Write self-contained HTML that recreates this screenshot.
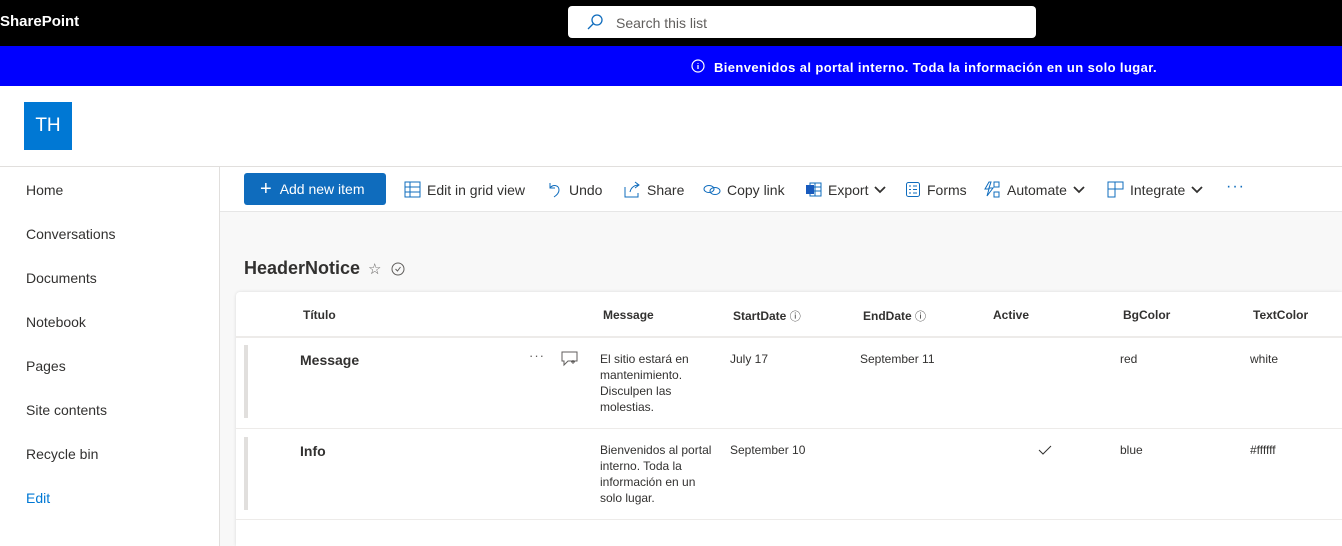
<!DOCTYPE html>
<html><head><meta charset="utf-8"><style>
*{margin:0;padding:0;box-sizing:border-box}
body{width:1342px;height:546px;overflow:hidden;font-family:"Liberation Sans",sans-serif;color:#323130;background:#fff;position:relative}
.abs{position:absolute}
.top{left:0;top:0;width:1342px;height:46px;background:#000}
.search{left:568px;top:6px;width:468px;height:32px;background:#fff;border-radius:4px}
.blue{left:0;top:46px;width:1342px;height:40px;background:#0000ff}
.nav a{position:absolute;left:26px;font-size:14px;color:#323130;text-decoration:none}
.cmd{font-size:14px;color:#323130;top:181px;display:flex;align-items:center;gap:6px;white-space:nowrap}
.hd{font-size:12px;font-weight:bold;color:#323130;top:308px}
.cell{font-size:12px;color:#323130;line-height:16px}
svg{display:block}
</style></head><body>
<div class="abs top"></div>
<div class="abs" style="left:0;top:13px;color:#fff;font-weight:bold;font-size:15px">SharePoint</div>
<div class="abs search"></div>
<svg class="abs" style="left:586px;top:13px" width="18" height="18" viewBox="0 0 18 18"><circle cx="11" cy="7" r="5" fill="none" stroke="#0f6cbd" stroke-width="1.3"/><path d="M7.5 10.5L2 16" stroke="#0f6cbd" stroke-width="1.3"/></svg>
<div class="abs" style="left:616px;top:15px;font-size:14px;color:#605e5c">Search this list</div>
<div class="abs blue"></div>
<svg class="abs" style="left:691px;top:59px" width="14" height="14" viewBox="0 0 14 14"><circle cx="7" cy="7" r="6" fill="none" stroke="#fff" stroke-width="1.2"/><path d="M7 6v4M7 4v.8" stroke="#fff" stroke-width="1.3"/></svg>
<div class="abs" style="left:714px;top:60px;color:#fff;font-weight:bold;font-size:13px;letter-spacing:0.4px">Bienvenidos al portal interno. Toda la información en un solo lugar.</div>
<div class="abs" style="left:24px;top:102px;width:48px;height:48px;background:#0078d4;color:#fff;font-size:19px;line-height:48px;text-align:center">TH</div>
<div class="abs" style="left:0;top:166px;width:1342px;height:1px;background:#e1dfdd"></div>
<div class="abs" style="left:219px;top:167px;width:1px;height:379px;background:#e1dfdd"></div>
<div class="nav">
<a style="top:182px">Home</a><a style="top:226px">Conversations</a><a style="top:270px">Documents</a><a style="top:314px">Notebook</a><a style="top:358px">Pages</a><a style="top:402px">Site contents</a><a style="top:446px">Recycle bin</a><a style="top:490px;color:#0078d4">Edit</a>
</div>
<div class="abs" style="left:220px;top:212px;width:1122px;height:334px;background:#f8f8f8"></div>
<div class="abs" style="left:220px;top:211px;width:1122px;height:1px;background:#e6e6e6"></div>
<div class="abs" style="left:244px;top:173px;width:142px;height:32px;background:#0f6cbd;border-radius:3px;color:#fff;font-size:14px;display:flex;align-items:center;padding-left:16px;gap:8px"><span style="font-size:20px;font-weight:300;line-height:1">+</span>Add new item</div>
<div class="abs cmd" style="left:404px"><svg width="17" height="17" viewBox="0 0 17 17"><rect x="1" y="1" width="15" height="15" fill="none" stroke="#0f6cbd"/><path d="M1 6h15M1 11h15M6 1v15" stroke="#0f6cbd"/></svg>Edit in grid view</div>
<div class="abs cmd" style="left:547px"><svg width="16" height="17" viewBox="0 0 16 17"><path d="M3 2v5h5M3 7c3-4 9-3 9 2 0 3-2 5-5 7" fill="none" stroke="#0f6cbd"/></svg>Undo</div>
<div class="abs cmd" style="left:624px"><svg width="17" height="17" viewBox="0 0 17 17"><path d="M1 6v10h13v-4M6 11c1-5 5-7 9-7M11 1l4 3-4 3" fill="none" stroke="#0f6cbd"/></svg>Share</div>
<div class="abs cmd" style="left:703px"><svg width="18" height="17" viewBox="0 0 18 17"><ellipse cx="6" cy="8" rx="5" ry="3.5" fill="none" stroke="#0f6cbd"/><ellipse cx="12" cy="10" rx="5" ry="3.5" fill="none" stroke="#0f6cbd"/></svg>Copy link</div>
<div class="abs cmd" style="left:805px"><svg width="17" height="17" viewBox="0 0 17 17"><rect x="5" y="2" width="11" height="13" fill="none" stroke="#0f6cbd"/><path d="M10 2v13M5 6h11M5 10h11" stroke="#0f6cbd"/><rect x="1" y="4" width="8" height="9" fill="#185abd"/></svg>Export<svg width="12" height="8" viewBox="0 0 12 8"><path d="M1 1l5 5 5-5" fill="none" stroke="#323130" stroke-width="1.8"/></svg></div>
<div class="abs cmd" style="left:905px"><svg width="16" height="17" viewBox="0 0 16 17"><rect x="1.5" y="1.5" width="13" height="14" rx="2" fill="none" stroke="#0f6cbd"/><path d="M4 5h2M8 5h4M4 8.5h2M8 8.5h4M4 12h2M8 12h4" stroke="#0f6cbd"/></svg>Forms</div>
<div class="abs cmd" style="left:983px"><svg width="18" height="17" viewBox="0 0 18 17"><path d="M6 1L2 8h4l-2 7 6-8H6l2-6z" fill="none" stroke="#0f6cbd"/><rect x="11" y="1" width="5" height="5" fill="none" stroke="#0f6cbd"/><rect x="11" y="11" width="5" height="5" fill="none" stroke="#0f6cbd"/></svg>Automate<svg width="12" height="8" viewBox="0 0 12 8"><path d="M1 1l5 5 5-5" fill="none" stroke="#323130" stroke-width="1.8"/></svg></div>
<div class="abs cmd" style="left:1107px"><svg width="17" height="17" viewBox="0 0 17 17"><path d="M1 1h15v7H8v8H1zM1 8h7M8 1v7" fill="none" stroke="#0f6cbd"/></svg>Integrate<svg width="12" height="8" viewBox="0 0 12 8"><path d="M1 1l5 5 5-5" fill="none" stroke="#323130" stroke-width="1.8"/></svg></div>
<div class="abs" style="left:1226px;top:178px;color:#0f6cbd;font-size:16px;letter-spacing:1px">···</div>
<div class="abs" style="left:244px;top:258px;font-size:18px;font-weight:bold;color:#323130">HeaderNotice</div>
<div class="abs" style="left:368px;top:260px;font-size:15px;color:#605e5c">☆</div>
<svg class="abs" style="left:391px;top:262px" width="14" height="14" viewBox="0 0 14 14"><circle cx="7" cy="7" r="6" fill="none" stroke="#605e5c"/><path d="M4.5 7l2 2 3-4" fill="none" stroke="#605e5c"/></svg>
<div class="abs" style="left:236px;top:292px;width:1106px;height:254px;background:#fff;border-radius:4px 0 0 0;box-shadow:0 0 3px rgba(0,0,0,.12)"></div>
<div class="abs" style="left:236px;top:336px;width:1106px;height:2px;background:#edebe9"></div>
<div class="abs" style="left:236px;top:428px;width:1106px;height:1px;background:#edebe9"></div>
<div class="abs" style="left:236px;top:519px;width:1106px;height:1px;background:#edebe9"></div>
<div class="abs hd" style="left:303px">Título</div>
<div class="abs hd" style="left:603px">Message</div>
<div class="abs hd" style="left:733px">StartDate <span style="font-weight:normal;font-size:11px">ⓘ</span></div>
<div class="abs hd" style="left:863px">EndDate <span style="font-weight:normal;font-size:11px">ⓘ</span></div>
<div class="abs hd" style="left:993px">Active</div>
<div class="abs hd" style="left:1123px">BgColor</div>
<div class="abs hd" style="left:1253px">TextColor</div>
<div class="abs" style="left:244px;top:345px;width:4px;height:73px;background:#e1dfdd"></div>
<div class="abs" style="left:244px;top:437px;width:4px;height:73px;background:#e1dfdd"></div>
<div class="abs" style="left:300px;top:352px;font-size:14px;font-weight:bold">Message</div>
<div class="abs" style="left:300px;top:443px;font-size:14px;font-weight:bold">Info</div>
<div class="abs" style="left:529px;top:348px;font-size:13px;color:#605e5c;letter-spacing:1px">···</div>
<svg class="abs" style="left:561px;top:351px" width="18" height="16" viewBox="0 0 18 16"><path d="M1 1h15v9H7l-4 4v-4H1z" fill="none" stroke="#605e5c"/><path d="M12 9v4M10 11h4" stroke="#605e5c"/></svg>
<div class="abs cell" style="left:600px;top:351px;width:110px">El sitio estará en mantenimiento. Disculpen las molestias.</div>
<div class="abs cell" style="left:600px;top:442px;width:112px">Bienvenidos al portal interno. Toda la información en un solo lugar.</div>
<div class="abs cell" style="left:730px;top:351px">July 17</div>
<div class="abs cell" style="left:860px;top:351px">September 11</div>
<div class="abs cell" style="left:1120px;top:351px">red</div>
<div class="abs cell" style="left:1250px;top:351px">white</div>
<div class="abs cell" style="left:730px;top:442px">September 10</div>
<svg class="abs" style="left:1038px;top:444px" width="14" height="12" viewBox="0 0 14 12"><path d="M1 6l4 4 8-8" fill="none" stroke="#323130"/></svg>
<div class="abs cell" style="left:1120px;top:442px">blue</div>
<div class="abs cell" style="left:1250px;top:442px">#ffffff</div>
</body></html>
